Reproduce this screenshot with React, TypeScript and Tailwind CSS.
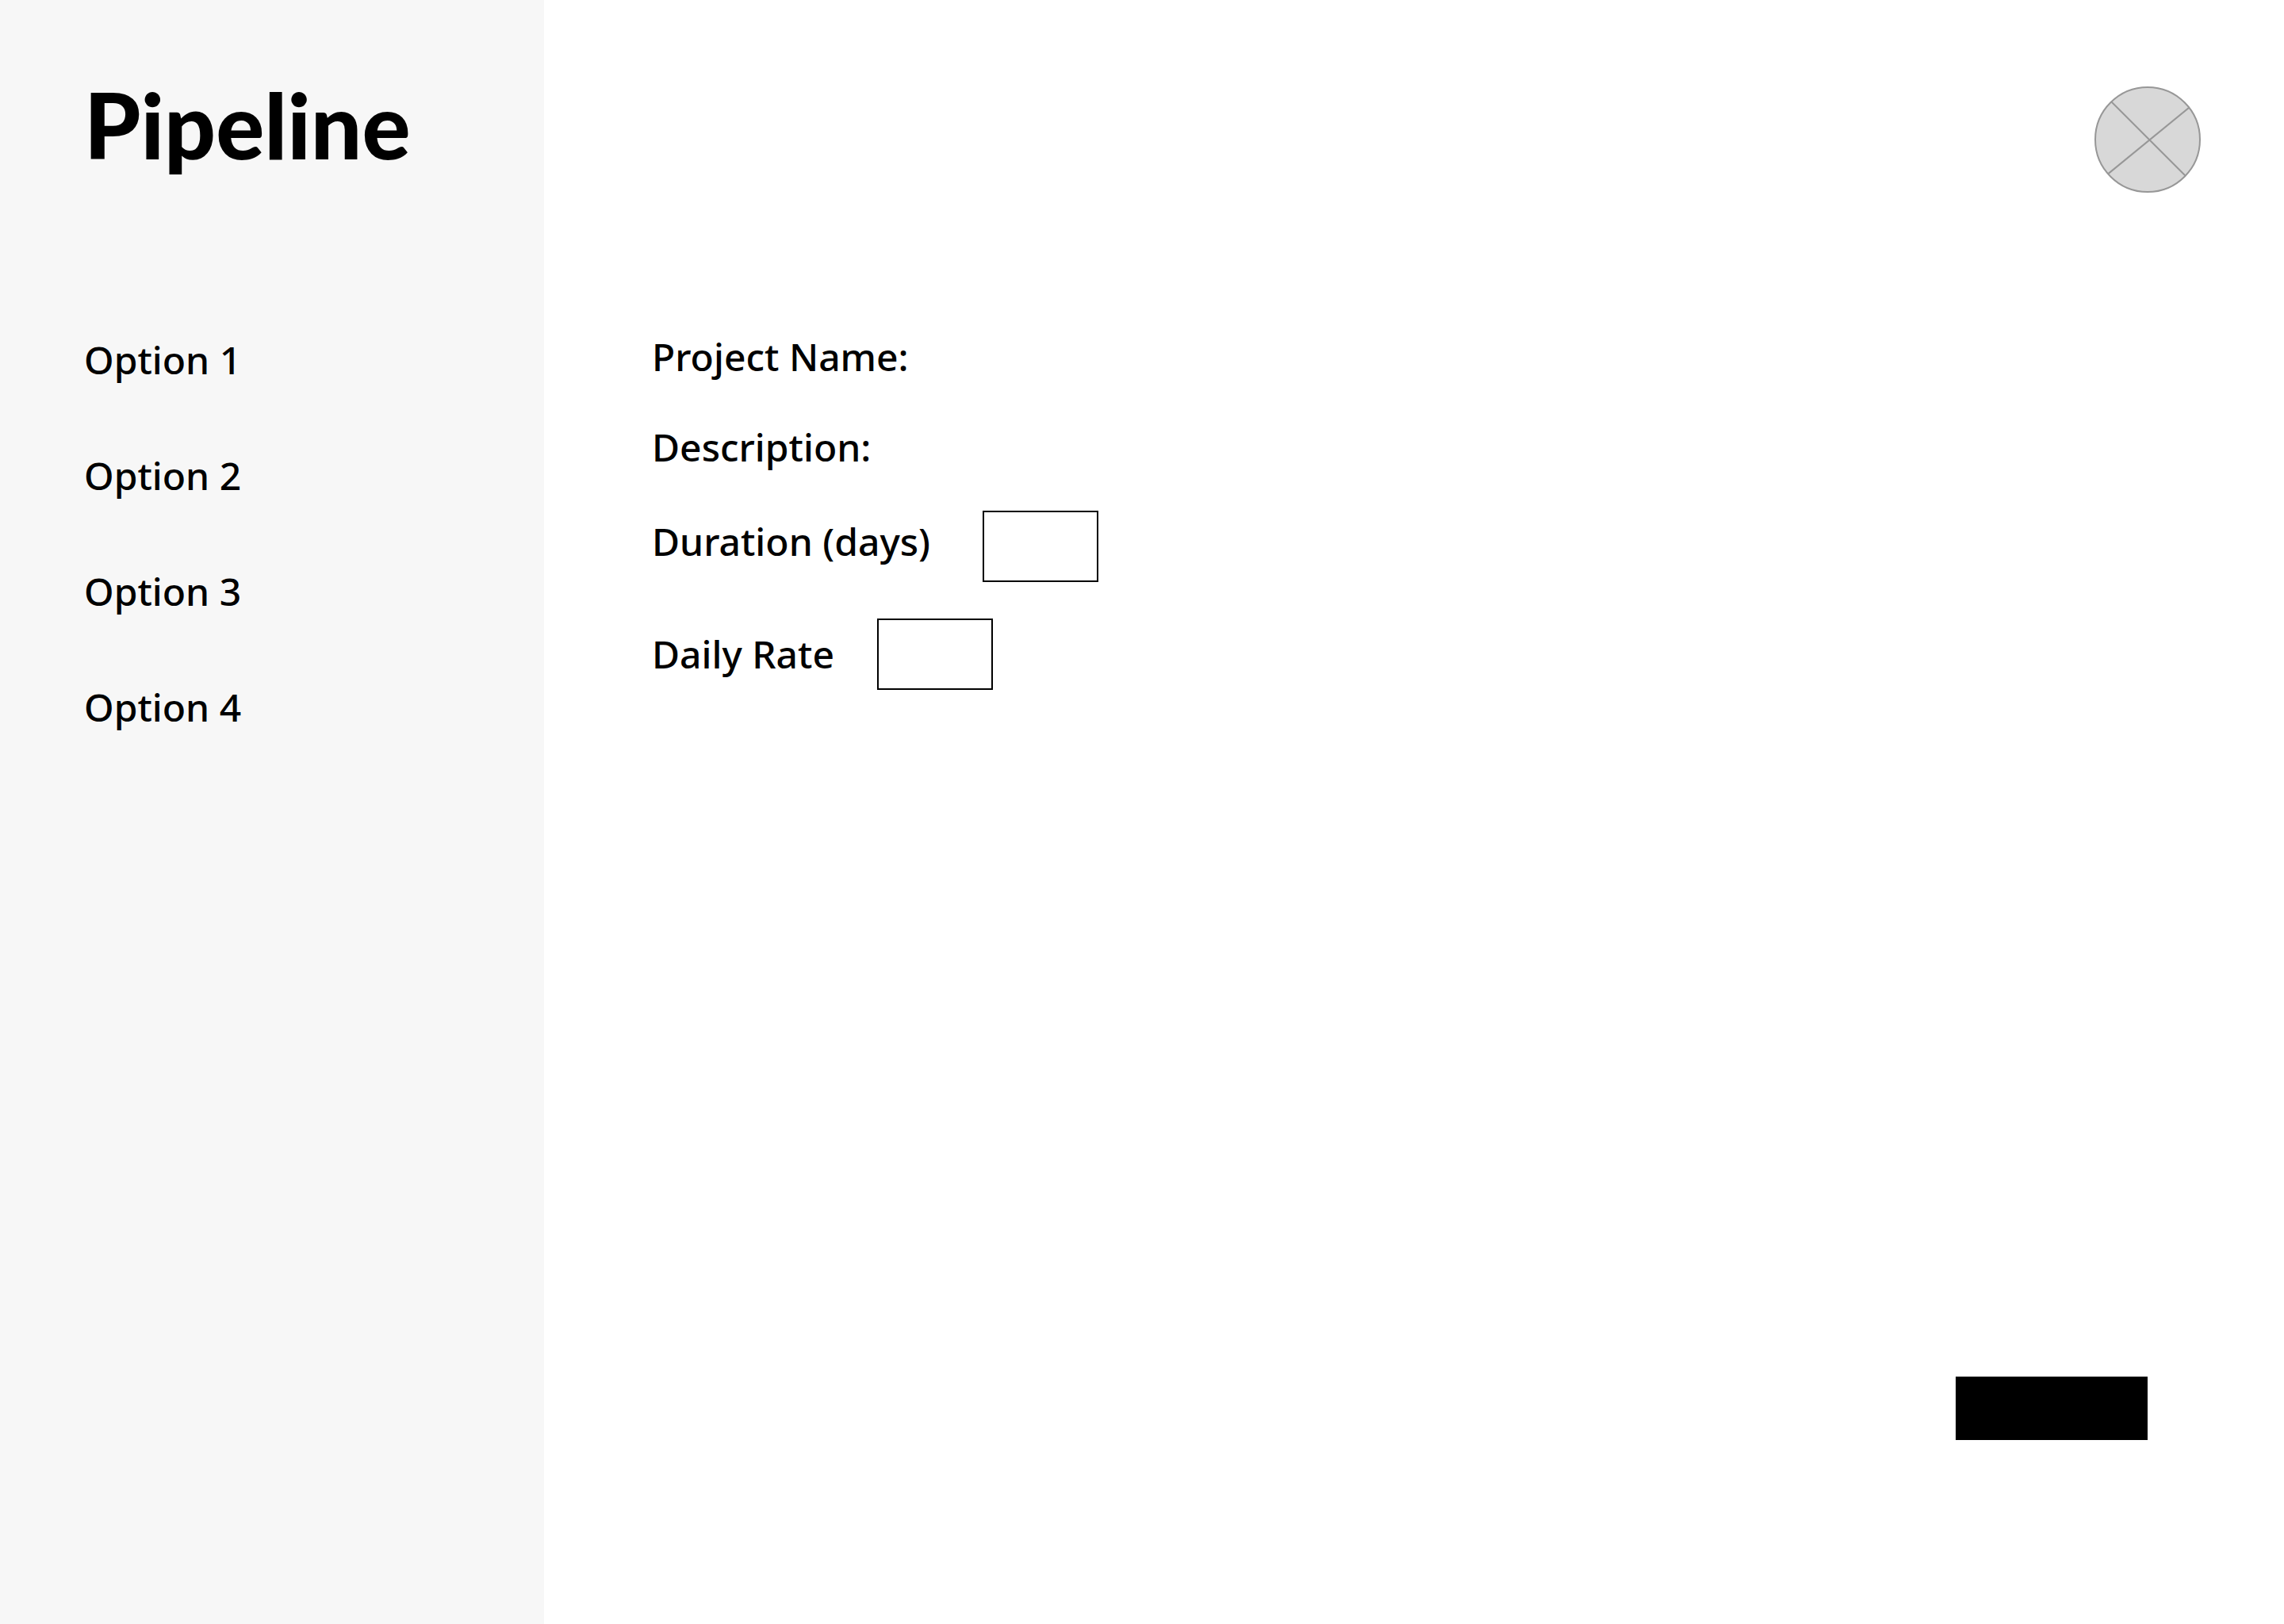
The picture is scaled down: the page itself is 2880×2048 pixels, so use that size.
const options = ['Option 1', 'Option 2', 'Option 3', 'Option 4'];

function Sidebar() {
  return (
    <aside className="flex w-[686px] shrink-0 flex-col bg-[#f7f7f7] pt-[93px] pl-[106px]">
      <h1 className="font-['Lato',sans-serif] text-[114px] leading-[128px] font-black">Pipeline</h1>
      <nav className="mt-[201px] flex flex-col items-start gap-[82px]">
        {options.map((option) => (
          <a key={option} href="#" className="leading-[64px]">
            {option}
          </a>
        ))}
      </nav>
    </aside>
  );
}

function Avatar() {
  return (
    <button type="button" aria-label="Account" className="size-[134px] rounded-full">
      <svg viewBox="0 0 134 134" className="size-full" fill="none" stroke="#979797" strokeWidth="2">
        <circle cx="67" cy="67" r="66" fill="#d8d8d8" />
        <path d="M21.5 19.5 114.5 112.5M119 27 17.5 110" strokeLinecap="square" />
      </svg>
    </button>
  );
}

export default function App() {
  return (
    <div className="flex min-h-screen bg-white font-['Noto_Sans',sans-serif] text-[48px] font-medium text-black">
      <Sidebar />
      <main className="flex min-w-0 flex-1 flex-col">
        <header className="flex justify-end pt-[109px] pr-[105px]">
          <Avatar />
        </header>
        <form className="flex flex-1 flex-col pt-[175px] pr-[172px] pb-[232px] pl-[136px]">
          <div className="flex items-center gap-6">
            <label htmlFor="name" className="leading-[64px]">Project Name:</label>
            <input id="name" type="text" className="h-[64px] min-w-0 flex-1 outline-none" />
          </div>
          <div className="mt-[50px] flex items-center gap-6">
            <label htmlFor="description" className="leading-[64px]">Description:</label>
            <input id="description" type="text" className="h-[64px] min-w-0 flex-1 outline-none" />
          </div>
          <div className="mt-[48px] flex items-center gap-[66px]">
            <label htmlFor="duration" className="pb-3 leading-[64px]">Duration (days)</label>
            <input id="duration" type="text" className="h-[90px] w-[146px] border-2 border-black px-3 outline-none" />
          </div>
          <div className="mt-[46px] flex items-center gap-[54px]">
            <label htmlFor="rate" className="leading-[64px]">Daily Rate</label>
            <input id="rate" type="text" className="h-[90px] w-[146px] border-2 border-black px-3 outline-none" />
          </div>
          <button type="submit" aria-label="Submit" className="mt-auto h-[80px] w-[242px] self-end bg-black" />
        </form>
      </main>
    </div>
  );
}
